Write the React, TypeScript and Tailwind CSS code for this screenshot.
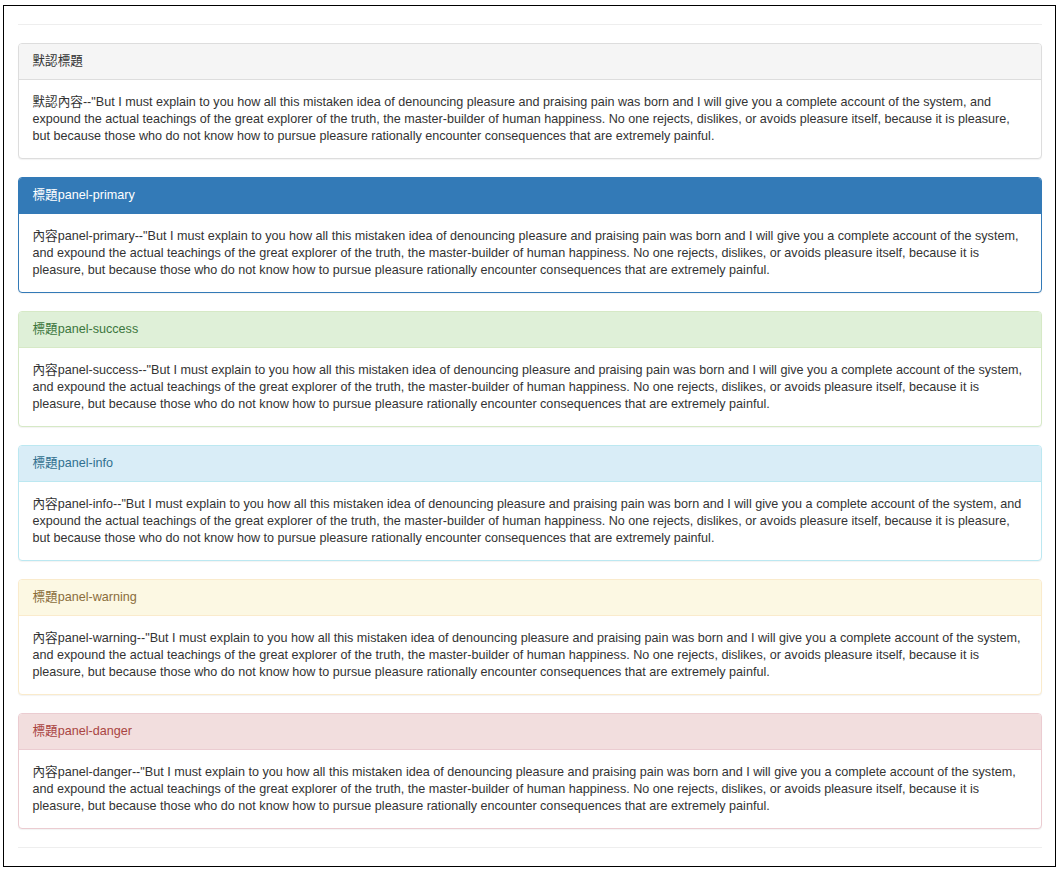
const LOREM =
  '"But I must explain to you how all this mistaken idea of denouncing pleasure and praising pain was born and I will give you a complete account of the system, and expound the actual teachings of the great explorer of the truth, the master-builder of human happiness. No one rejects, dislikes, or avoids pleasure itself, because it is pleasure, but because those who do not know how to pursue pleasure rationally encounter consequences that are extremely painful.';

type Panel = {
  title: string;
  body: string;
  border: string;
  head: string;
};

const panels: Panel[] = [
  {
    title: "默認標題",
    body: "默認內容--",
    border: "border-[#ddd]",
    head: "bg-[#f5f5f5] text-[#333] border-[#ddd]",
  },
  {
    title: "標題panel-primary",
    body: "內容panel-primary--",
    border: "border-[#337ab7]",
    head: "bg-[#337ab7] text-white border-[#337ab7]",
  },
  {
    title: "標題panel-success",
    body: "內容panel-success--",
    border: "border-[#d6e9c6]",
    head: "bg-[#dff0d8] text-[#3c763d] border-[#d6e9c6]",
  },
  {
    title: "標題panel-info",
    body: "內容panel-info--",
    border: "border-[#bce8f1]",
    head: "bg-[#d9edf7] text-[#31708f] border-[#bce8f1]",
  },
  {
    title: "標題panel-warning",
    body: "內容panel-warning--",
    border: "border-[#faebcc]",
    head: "bg-[#fcf8e3] text-[#8a6d3b] border-[#faebcc]",
  },
  {
    title: "標題panel-danger",
    body: "內容panel-danger--",
    border: "border-[#ebccd1]",
    head: "bg-[#f2dede] text-[#a94442] border-[#ebccd1]",
  },
];

export default function App() {
  return (
    <div className="min-h-[871px] bg-white pt-[5px] pl-[3px] font-['Liberation_Sans','Noto_Sans_CJK_TC',sans-serif] text-[12.6px] leading-[17px] text-[#333]">
      <div className="w-[1053px] border border-black pl-[14px] pr-[13px]">
        <hr className="my-[18px] border-t border-[#eee]" />
        <div className="flex flex-col gap-[18px]">
          {panels.map((p) => (
            <div
              key={p.title}
              className={`rounded-[4px] border bg-white shadow-[0_1px_1px_rgba(0,0,0,0.05)] ${p.border}`}
            >
              <div className={`rounded-t-[3px] border-b px-[13.5px] py-[9px] ${p.head}`}>
                {p.title}
              </div>
              <div className="px-[13.5px] pt-[14px] pb-[13px]">
                {p.body}
                {LOREM}
              </div>
            </div>
          ))}
        </div>
        <hr className="my-[18px] border-t border-[#eee]" />
      </div>
    </div>
  );
}
